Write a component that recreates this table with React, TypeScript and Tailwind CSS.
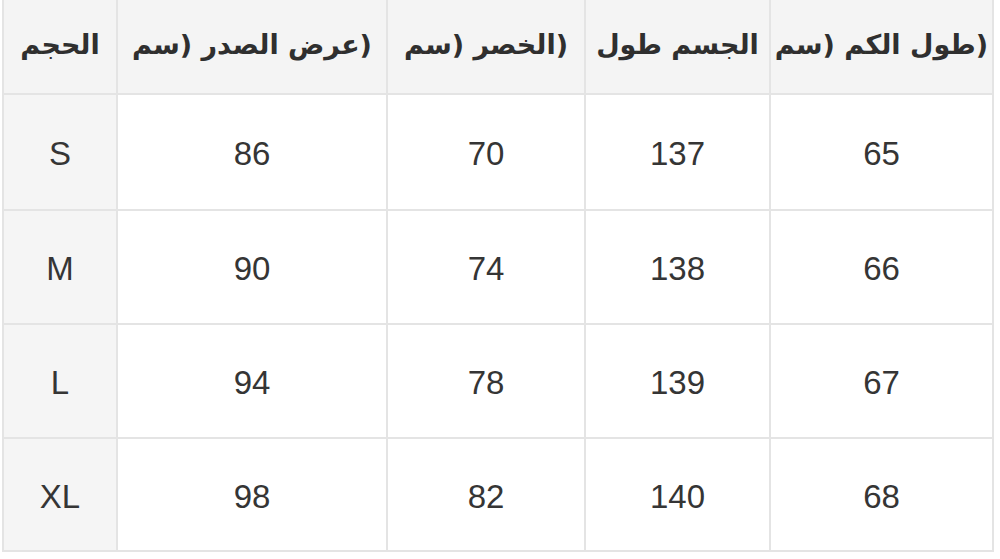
import React from "react";

const headers = [
  "الحجم",
  "(عرض الصدر (سم",
  "(الخصر (سم",
  "الجسم طول",
  "(طول الكم (سم",
];

const rows = [
  ["S", "86", "70", "137", "65"],
  ["M", "90", "74", "138", "66"],
  ["L", "94", "78", "139", "67"],
  ["XL", "98", "82", "140", "68"],
];

export default function App() {
  return (
    <div className="w-[1000px] h-[559px] bg-white overflow-hidden">
      <div className="ml-[2px] w-[992px] bg-[#e4e4e4] px-[2px] pb-[2px] grid grid-cols-[112px_268px_196px_183px_221px] grid-rows-[93px_114px_112px_112px_111px] gap-[2px]">
        {headers.map((h, i) => (
          <div
            key={i}
            className="bg-[#f4f4f4] flex items-center justify-center text-[#2f2f2f] text-[27px] font-bold pb-[2px] whitespace-nowrap"
            style={{ fontFamily: '"DejaVu Sans", sans-serif' }}
          >
            <span dir="rtl">{h}</span>
          </div>
        ))}
        {rows.map((r, ri) =>
          r.map((c, ci) => (
            <div
              key={`${ri}-${ci}`}
              className={`${ci === 0 ? "bg-[#f5f5f5]" : "bg-white"} flex items-center justify-center text-[#353535] text-[33px] pt-[4px] font-['Liberation_Sans',Arial,sans-serif]`}
            >
              {c}
            </div>
          ))
        )}
      </div>
    </div>
  );
}
